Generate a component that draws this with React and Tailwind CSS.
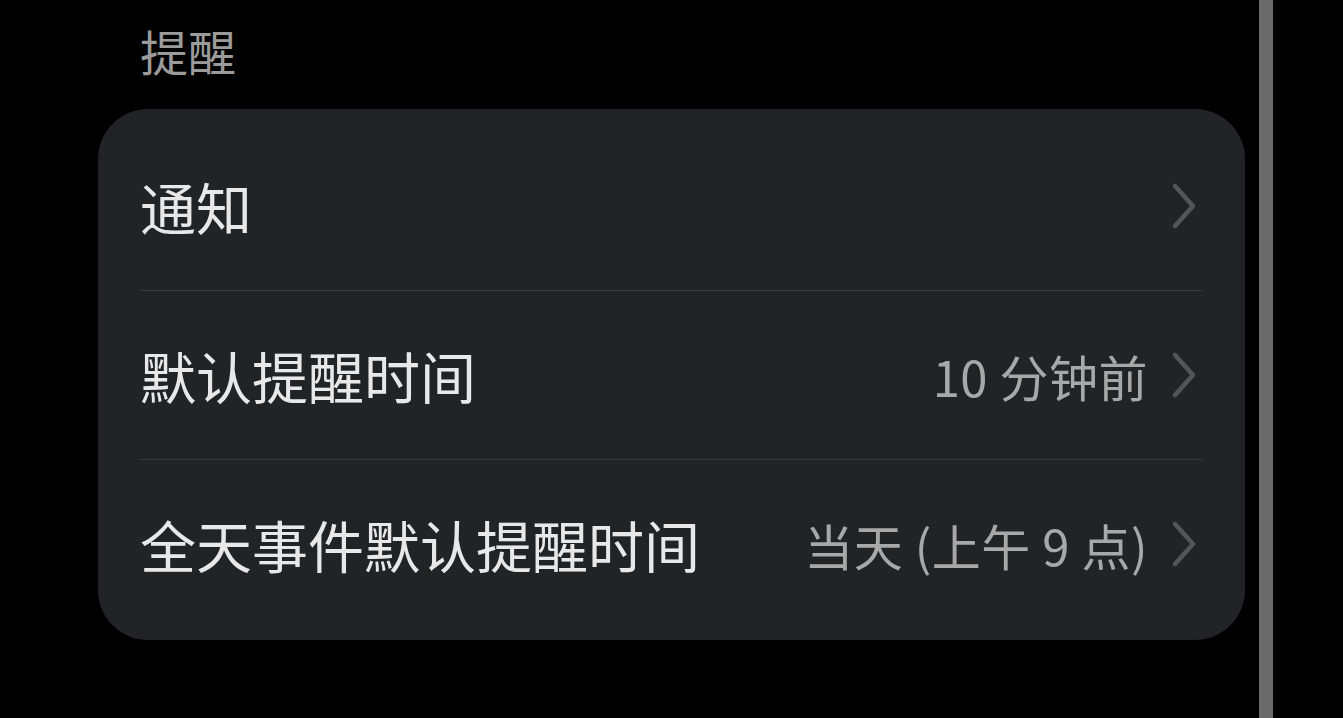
import React from 'react';

const Chevron = () => (
  <svg width="26" height="48" viewBox="0 0 26 48" fill="none" className="shrink-0">
    <path d="M4 4 L22 24 L4 44" stroke="#545558" strokeWidth="4.5" strokeLinecap="round" strokeLinejoin="round" />
  </svg>
);

const rows = [
  { label: '通知', value: '' },
  { label: '默认提醒时间', value: '10 分钟前' },
  { label: '全天事件默认提醒时间', value: '当天 (上午 9 点)' },
];

const App = () => {
  return (
    <div className="h-[718px] w-full bg-black flex overflow-hidden" style={{ fontFamily: '"Noto Sans CJK SC", "Noto Sans", sans-serif' }}>
      {/* Content column */}
      <div className="w-[1259px] shrink-0 pl-[98px] pr-[14px]">
        {/* Section header */}
        <div className="pt-[26px] pl-[42px] text-[48px] leading-[48px] text-[#9b9b9b]">提醒</div>

        {/* Card */}
        <div className="mt-[35px] bg-[#222325] rounded-[50px] pt-[13px] pb-[12px] pl-[42px] pr-[43px]">
          {rows.map((row, i) => (
            <React.Fragment key={row.label}>
              {i > 0 && <div className="h-px bg-[#3a3b3e]" />}
              <div className="h-[168px] flex items-center justify-between pr-[5px]">
                <span className="text-[56px] leading-none text-[#e8e8e8]">{row.label}</span>
                <div className="flex items-center gap-[23px]">
                  {row.value && <span className="text-[49px] leading-none text-[#a8a8a8] tracking-[0.5px]">{row.value}</span>}
                  <Chevron />
                </div>
              </div>
            </React.Fragment>
          ))}
        </div>
      </div>

      {/* Scrollbar */}
      <div className="w-[14px] h-full bg-[#6a6a6a] shrink-0" />
      <div className="flex-1" />
    </div>
  );
};

export default App;
